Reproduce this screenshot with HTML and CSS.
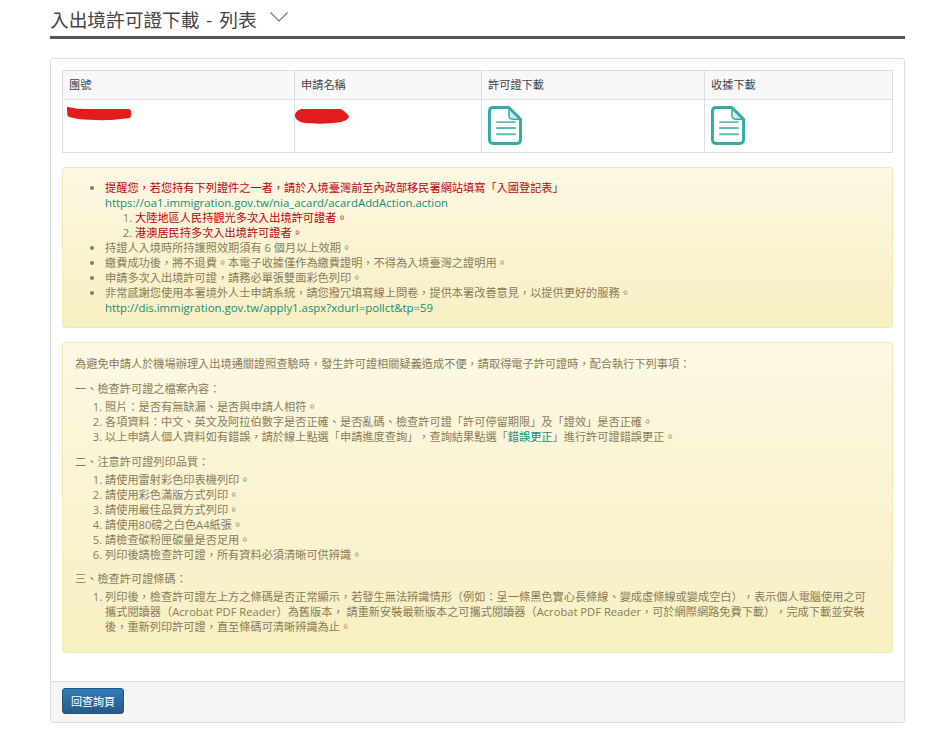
FILE: index.html
```html
<!DOCTYPE html>
<html lang="zh-Hant">
<head>
    <meta charset="UTF-8">
    <title>入出境許可證下載 - 列表</title>
    <link rel="stylesheet" href="styles.css">
</head>
<body>
    <div class="page">
        <h1 class="page-title">
            <span>入出境許可證下載 - 列表</span>
            <svg class="chevron" width="18" height="10" viewBox="0 0 18 10"><path d="M0.500 0.500 L9 9 L17.500 0.500" fill="none" stroke="#777" stroke-width="1.2"/></svg>
        </h1>

        <div class="panel">
            <div class="panel-body">
                <table class="list-table">
                    <thead>
                        <tr>
                            <th class="col-group">團號</th>
                            <th class="col-name">申請名稱</th>
                            <th class="col-permit">許可證下載</th>
                            <th>收據下載</th>
                        </tr>
                    </thead>
                    <tbody>
                        <tr>
                            <td>
                                <svg class="redact" width="66" height="16" viewBox="0 0 66 16"><path d="M1 1 C8 2 12 3 20 3 L63 3 C66 4 66 9 64 12 L55 13 C40 15 25 14 12 13 L3 11 C0 9 2 7 1 5 Z" fill="#e31b1b"/></svg>
                            </td>
                            <td>
                                <svg class="redact redact-name" width="55" height="16" viewBox="0 0 55 16"><path d="M6 1 L45 1 C49 2 51 5 54 8 C54 11 50 13 46 14 C35 16 20 16 10 15 C4 14 0 11 0 8 C0 4 3 2 6 1 Z" fill="#e31b1b"/></svg>
                            </td>
                            <td>
                                <svg class="file-icon" width="34" height="39" viewBox="0.500 0.500 35 40">
                                    <path d="M6 2 H22 L34 14 V35 Q34 39 30 39 H6 Q2 39 2 35 V6 Q2 2 6 2 Z" fill="#fff" stroke="#34aca6" stroke-width="3" stroke-linejoin="round"/>
                                    <path d="M22 3 V10 Q22 14 26 14 H33 Z" fill="#d5ecea" stroke="#34aca6" stroke-width="1.5"/>
                                    <path d="M9 17 H29 M9 23 H29 M9 29.500 H29" stroke="#5cbdb7" stroke-width="2"/>
                                </svg>
                            </td>
                            <td>
                                <svg class="file-icon" width="34" height="39" viewBox="0.500 0.500 35 40">
                                    <path d="M6 2 H22 L34 14 V35 Q34 39 30 39 H6 Q2 39 2 35 V6 Q2 2 6 2 Z" fill="#fff" stroke="#34aca6" stroke-width="3" stroke-linejoin="round"/>
                                    <path d="M22 3 V10 Q22 14 26 14 H33 Z" fill="#d5ecea" stroke="#34aca6" stroke-width="1.5"/>
                                    <path d="M9 17 H29 M9 23 H29 M9 29.500 H29" stroke="#5cbdb7" stroke-width="2"/>
                                </svg>
                            </td>
                        </tr>
                    </tbody>
                </table>

                <div class="note note-reminder">
                    <ul>
                        <li>
                            <span class="red">提醒您，若您持有下列證件之一者，請於入境臺灣前至內政部移民署網站填寫「入國登記表」</span><br>
                            <a href="#">https://oa1.immigration.gov.tw/nia_acard/acardAddAction.action</a>
                            <ol>
                                <li><span class="red">大陸地區人民持觀光多次入出境許可證者。</span></li>
                                <li><span class="red">港澳居民持多次入出境許可證者。</span></li>
                            </ol>
                        </li>
                        <li>持證人入境時所持護照效期須有 6 個月以上效期。</li>
                        <li>繳費成功後，將不退費。本電子收據僅作為繳費證明，不得為入境臺灣之證明用。</li>
                        <li>申請多次入出境許可證，請務必單張雙面彩色列印。</li>
                        <li>
                            非常感謝您使用本署境外人士申請系統，請您撥冗填寫線上問卷，提供本署改善意見，以提供更好的服務。<br>
                            <a href="#">http://dis.immigration.gov.tw/apply1.aspx?xdurl=pollct&amp;tp=59</a>
                        </li>
                    </ul>
                </div>

                <div class="note note-guide">
                    <p>為避免申請人於機場辦理入出境通關證照查驗時，發生許可證相關疑義造成不便，請取得電子許可證時，配合執行下列事項：</p>

                    <h4>一、檢查許可證之檔案內容：</h4>
                    <ol>
                        <li>照片：是否有無缺漏、是否與申請人相符。</li>
                        <li>各項資料：中文、英文及阿拉伯數字是否正確、是否亂碼、檢查許可證「許可停留期限」及「證效」是否正確。</li>
                        <li>以上申請人個人資料如有錯誤，請於線上點選「申請進度查詢」，查詢結果點選「<a href="#" class="inline-link">錯誤更正</a>」進行許可證錯誤更正。</li>
                    </ol>

                    <h4>二、注意許可證列印品質：</h4>
                    <ol>
                        <li>請使用雷射彩色印表機列印。</li>
                        <li>請使用彩色滿版方式列印。</li>
                        <li>請使用最佳品質方式列印。</li>
                        <li>請使用80磅之白色A4紙張。</li>
                        <li>請檢查碳粉匣碳量是否足用。</li>
                        <li>列印後請檢查許可證，所有資料必須清晰可供辨識。</li>
                    </ol>

                    <h4>三、檢查許可證條碼：</h4>
                    <ol>
                        <li>列印後，檢查許可證左上方之條碼是否正常顯示，若發生無法辨識情形（例如：呈一條黑色實心長條線、變成虛條線或變成空白），表示個人電腦使用之可攜式閱讀器（Acrobat PDF Reader）為舊版本， 請重新安裝最新版本之可攜式閱讀器（Acrobat PDF Reader，可於網際網路免費下載），完成下載並安裝後，重新列印許可證，直至條碼可清晰辨識為止。</li>
                    </ol>
                </div>
            </div>

            <div class="panel-footer">
                <button class="btn-back">回查詢頁</button>
            </div>
        </div>
    </div>
</body>
</html>
```

FILE: styles.css
```css
:root {
    --border-color: #ddd;
    --note-text: #8a7c58;
    --link-color: #0f8f7c;
    --red-text: #c4000f;
}

body {
    margin: 0;
    background-color: #fff;
    font-family: 'Open Sans', 'Noto Sans CJK TC', sans-serif;
    font-size: 11.2px;
    line-height: 15px;
    color: #444;
    text-spacing-trim: space-all;
}

.page {
    width: 855px;
    margin-left: 50px;
}

.page-title {
    display: flex;
    align-items: center;
    gap: 13px;
    height: 34px;
    margin: 0 0 19px;
    padding-top: 2px;
    border-bottom: 3px solid #555;
    font-size: 18.7px;
    font-weight: 400;
    word-spacing: 2px;
    color: #444;
}

.chevron {
    margin-top: -5px;
}

.panel {
    border: 1px solid var(--border-color);
    border-radius: 3px;
    box-shadow: 0 1px 1px rgba(0, 0, 0, 0.05);
}

.panel-body {
    padding: 11px 11px 28px;
}

.list-table {
    width: 831px;
    table-layout: fixed;
    border-collapse: collapse;
    margin-bottom: 14px;
}

.list-table th,
.list-table td {
    border: 1px solid var(--border-color);
    padding: 6px;
    text-align: left;
    vertical-align: top;
}

.list-table th {
    height: 16px;
    background-color: #f8f8f8;
    font-weight: 400;
    color: #444;
}

.list-table td {
    height: 39px;
    padding-bottom: 7px;
}

.col-group {
    width: 219px;
}

.col-name {
    width: 174px;
}

.col-permit {
    width: 210px;
}

.redact {
    display: block;
    margin: 0 0 0 -3px;
}

.redact-name {
    margin: 2px 0 0 -6px;
}

.file-icon {
    display: block;
}

.note {
    padding: 12px;
    border: 1px solid #f3e8b4;
    border-radius: 3px;
    background: linear-gradient(to bottom, #fcf8e3, #f8efc2);
    color: var(--note-text);
}

.note a {
    font-size: 11.4px;
    color: var(--link-color);
    text-decoration: none;
}

.note a.inline-link {
    font-size: inherit;
}

.red {
    color: var(--red-text);
}

.note ul {
    margin: 0;
    padding-left: 30px;
}

.note ul ol {
    margin: 0;
    padding-left: 30px;
}

.note-reminder {
    margin-bottom: 14px;
}

.note-guide {
    padding-top: 13px;
    padding-bottom: 13px;
}

.note-guide p {
    margin: 0 0 10px;
}

.note-guide h4 {
    margin: 0 0 3px;
    font-size: inherit;
    font-weight: 400;
}

.note-guide ol {
    margin: 0 0 9.5px;
    padding: 0 7px 0 30px;
}

.note-guide ol:last-child {
    margin-bottom: 5px;
}

.panel-footer {
    padding: 6px 11px 8px;
    background-color: #f5f5f5;
    border-top: 1px solid var(--border-color);
}

.btn-back {
    display: block;
    width: 62px;
    height: 26px;
    padding: 0;
    border: 1px solid #245580;
    border-radius: 3px;
    background: linear-gradient(to bottom, #337ab7, #265a88);
    font-family: inherit;
    font-size: 11px;
    color: #fff;
}
```
